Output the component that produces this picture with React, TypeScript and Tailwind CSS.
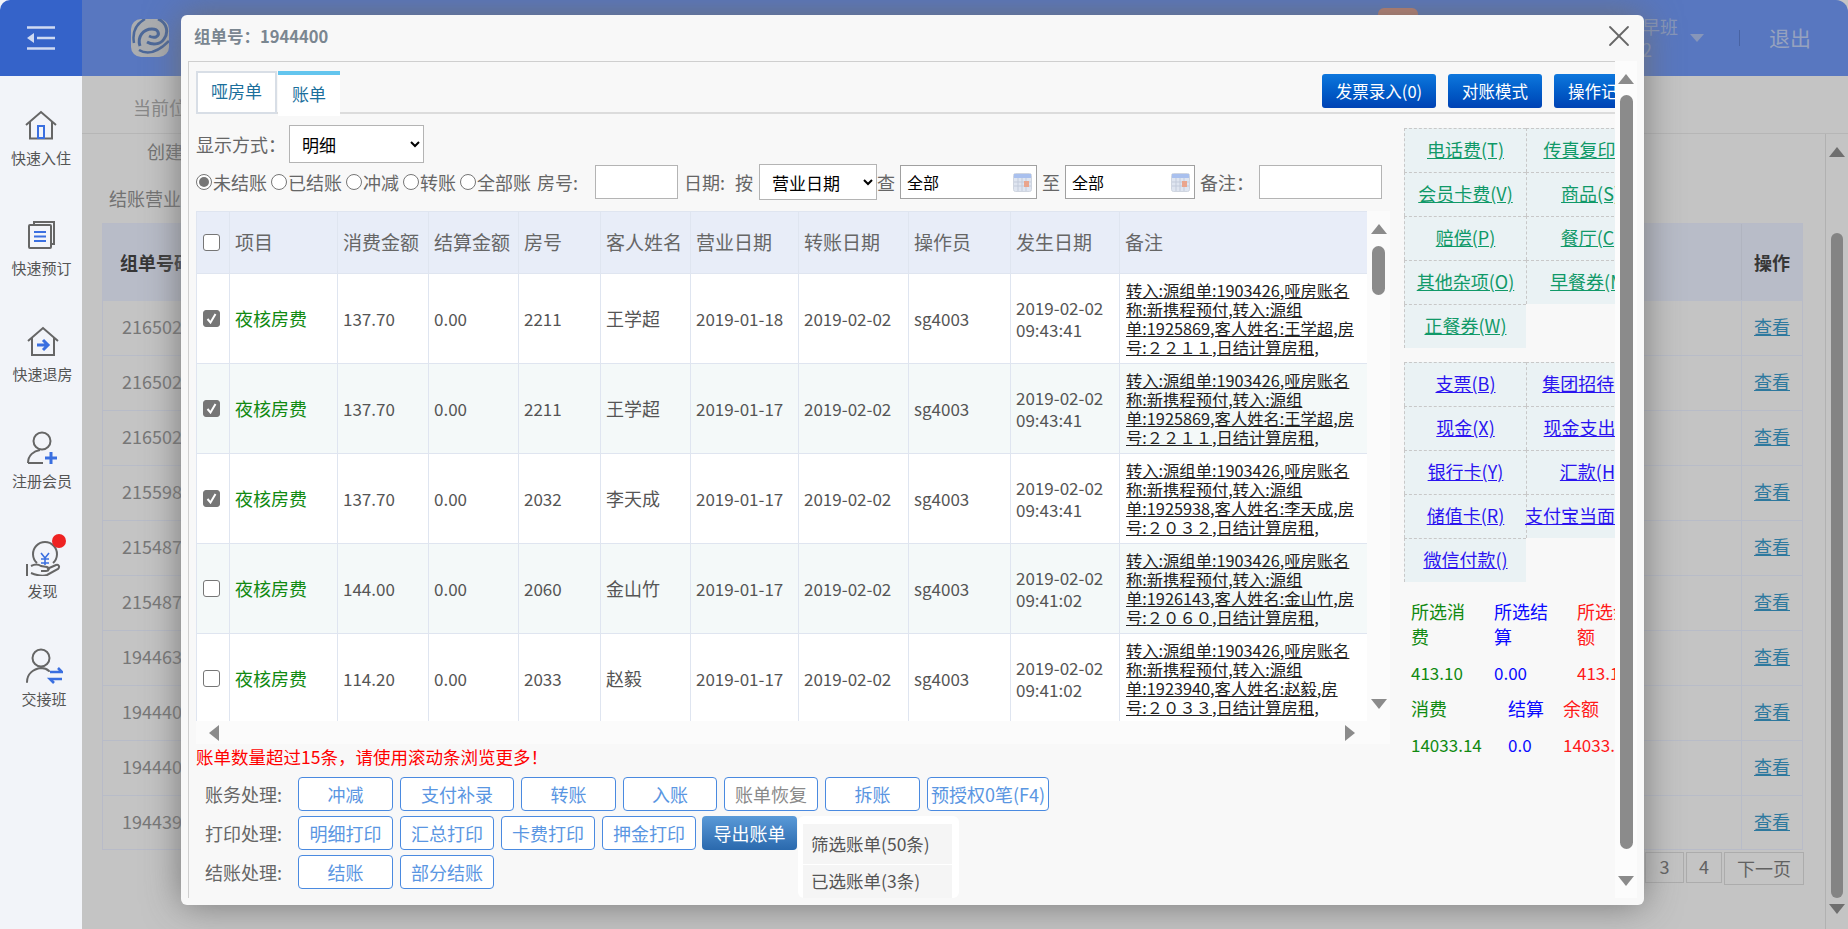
import { X } from "lucide-react"

interface BillRow {
  checked: boolean
  amount: string
  room: string
  guest: string
  bizDate: string
  time: string
  order: string
  wideRoom: string
}

const bills: BillRow[] = [
  { checked: true, amount: "137.70", room: "2211", guest: "王学超", bizDate: "2019-01-18", time: "09:43:41", order: "1925869", wideRoom: "２２１１" },
  { checked: true, amount: "137.70", room: "2211", guest: "王学超", bizDate: "2019-01-17", time: "09:43:41", order: "1925869", wideRoom: "２２１１" },
  { checked: true, amount: "137.70", room: "2032", guest: "李天成", bizDate: "2019-01-17", time: "09:43:41", order: "1925938", wideRoom: "２０３２" },
  { checked: false, amount: "144.00", room: "2060", guest: "金山竹", bizDate: "2019-01-17", time: "09:41:02", order: "1926143", wideRoom: "２０６０" },
  { checked: false, amount: "114.20", room: "2033", guest: "赵毅", bizDate: "2019-01-17", time: "09:41:02", order: "1923940", wideRoom: "２０３３" },
]

const backgroundRows = ["2165027", "2165026", "2165025", "2155986", "2154874", "2154873", "1944633", "1944405", "1944400", "1944399"]

const greenLinks = ["电话费(T)", "传真复印(F)", "会员卡费(V)", "商品(S)", "赔偿(P)", "餐厅(C)", "其他杂项(O)", "早餐券(M)", "正餐券(W)"]
const blueLinks = ["支票(B)", "集团招待(G)", "现金(X)", "现金支出(J)", "银行卡(Y)", "汇款(H)", "储值卡(R)", "支付宝当面付(Z)", "微信付款()"]

function Triangle({ dir, className }: { dir: "up" | "down" | "left" | "right"; className?: string }) {
  const points = {
    up: "0,12 8,0 16,12",
    down: "0,0 8,12 16,0",
    left: "10,0 10,16 0,8",
    right: "0,0 10,8 0,16",
  }[dir]
  const vertical = dir === "up" || dir === "down"
  return (
    <svg width={vertical ? 16 : 10} height={vertical ? 10 : 16} viewBox={vertical ? "0 0 16 12" : "0 0 10 16"} className={className} preserveAspectRatio="none">
      <polygon points={points} fill="#8b8b8b" />
    </svg>
  )
}

function HomeIcon() {
  return (
    <svg width="32" height="30" viewBox="0 0 32 30" fill="none" stroke="#666" strokeWidth="2">
      <path d="M1 15 16 2l15 13" />
      <path d="M5 12v16.500h22V12" />
      <rect x="13" y="16" width="6" height="12" stroke="#3a6fe0" />
    </svg>
  )
}

function DocsIcon() {
  return (
    <svg width="29" height="28" viewBox="0 0 29 28" fill="none" stroke="#666" strokeWidth="2">
      <path d="M7 3V1h20v22h-3" />
      <rect x="2" y="4" width="22" height="23" rx="1" />
      <path d="M7 11h12M7 15.500h12M7 20h12" stroke="#3a6fe0" />
    </svg>
  )
}

function ExitIcon() {
  return (
    <svg width="32" height="30" viewBox="0 0 32 30" fill="none" stroke="#666" strokeWidth="2">
      <path d="M1 15 16 2l15 13" />
      <path d="M5 12v17h22V12" />
      <path d="M10 19h11M16 14l5 5-5 5" stroke="#3a6fe0" strokeWidth="3" />
    </svg>
  )
}

function UserPlusIcon() {
  return (
    <svg width="30" height="34" viewBox="0 0 30 34" fill="none" stroke="#666" strokeWidth="2">
      <circle cx="15" cy="10" r="8.500" />
      <path d="M1 32c0-8 6-12 12-13M1 32h15" />
      <path d="M24 21v12M18 27h12" stroke="#3a6fe0" strokeWidth="3" />
    </svg>
  )
}

function CoinHandIcon() {
  return (
    <svg width="36" height="36" viewBox="0 0 36 36" fill="none" stroke="#666" strokeWidth="2">
      <path d="M12 23a12 12 0 1 1 16 0" />
      <path d="M16 13l4 5 4-5M20 18v7M16 19h8M16 23h8" stroke="#3a6fe0" strokeWidth="1.600" />
      <path d="M2 24v12" />
      <path d="M6 26c4-2 7-2 10 0l6 1c3 1 2 4-1 4h-5M22 29l9-4c3-1 4 2 2 4l-11 6c-5 2-11 0-16-2" />
    </svg>
  )
}

function UserSwapIcon() {
  return (
    <svg width="38" height="36" viewBox="0 0 38 36" fill="none" stroke="#666" strokeWidth="2">
      <circle cx="16" cy="10" r="8.500" />
      <path d="M2 34c0-8 6-13 14-14 3 0 6 1 8 3" strokeLinecap="round" />
      <path d="M25 24h12l-4-4M37 31H25l4 4" stroke="#3a6fe0" strokeWidth="2.600" />
    </svg>
  )
}

function LogoIcon() {
  return (
    <svg width="38" height="38" viewBox="0 0 38 38" fill="none">
      <rect width="38" height="38" rx="10" fill="#d6d9dd" />
      <path d="M14 0C5 5 1 13 3 24" stroke="#5f82c0" strokeWidth="2.500" />
      <path d="M27 0c9 4 11 13 6 20-4 6-12 6-17 3" stroke="#5f82c0" strokeWidth="3" />
      <path d="M9 27c-3-9 3-17 12-17 7 0 8 6 4 8-3 1-5 0-7-1" stroke="#5f82c0" strokeWidth="3" />
      <path d="M8 31c8 5 18 3 30-9" stroke="#5f82c0" strokeWidth="2.500" />
    </svg>
  )
}

function CalendarIcon() {
  return (
    <svg width="19" height="19" viewBox="0 0 19 19" className="shrink-0">
      <rect x="0.500" y="0.500" width="18" height="18" rx="2" fill="#dfe5f0" stroke="#cfd5e0" />
      <rect x="1" y="1" width="17" height="4" fill="#a9c0ee" />
      <path d="M1 9h17M1 13h17M5 5v13M9 5v13M13 5v13" stroke="#c3cbdb" />
      <rect x="11" y="8" width="5" height="6" fill="#eaa58d" />
    </svg>
  )
}

function Checkbox({ checked, className }: { checked: boolean; className?: string }) {
  return (
    <span className={`flex h-[17px] w-[17px] items-center justify-center rounded-[3px] border border-[#767676] ${checked ? "bg-[#767676]" : "bg-white"} ${className ?? ""}`}>
      {checked && (
        <svg width="11" height="11" viewBox="0 0 11 11" fill="none" stroke="#fff" strokeWidth="2">
          <path d="M1.500 6 4.500 9.500 9.500 1" />
        </svg>
      )}
    </span>
  )
}

function Radio({ label, checked }: { label: string; checked?: boolean }) {
  return (
    <span className="flex items-center">
      <span className="flex h-[16px] w-[16px] items-center justify-center rounded-full border border-[#767676] bg-white">
        {checked && <span className="h-[10px] w-[10px] rounded-full bg-[#767676]" />}
      </span>
      <span className="ml-px">{label}</span>
    </span>
  )
}

function DateInput({ className }: { className: string }) {
  return (
    <div className={`flex h-[34px] items-center justify-between border border-[#a0a0a0] bg-white pl-[6px] pr-[4px] text-[16px] text-black ${className}`}>
      <span>全部</span>
      <CalendarIcon />
    </div>
  )
}

function ActionButton({ label, width, muted }: { label: string; width: string; muted?: boolean }) {
  return (
    <button type="button" className={`h-[34px] rounded-[4px] border border-[#4a8ae0] bg-white text-[18px] whitespace-nowrap ${width} ${muted ? "text-[#8a8a8a]" : "text-[#5a96e2]"}`}>
      {label}
    </button>
  )
}

function TopButton({ label, width, className }: { label: string; width: string; className?: string }) {
  return (
    <button type="button" className={`h-[34px] shrink-0 rounded-[3px] bg-gradient-to-b from-[#0f77dd] to-[#0042b4] text-[16.500px] whitespace-nowrap text-white ${width} ${className ?? ""}`}>
      {label}
    </button>
  )
}

function SideItem({ icon, label, height, shift, dot }: { icon: React.ReactNode; label: string; height: string; shift?: string; dot?: boolean }) {
  return (
    <div className={`flex flex-col items-center ${height} ${shift ?? ""}`}>
      <div className="relative flex h-[36px] items-center justify-center">
        {icon}
        {dot && <span className="absolute right-[-5px] top-[-6px] h-[14px] w-[14px] rounded-full bg-[#ee2222]" />}
      </div>
      <div className="mt-[5px] text-[15px] leading-[20px] whitespace-nowrap text-[#555]">{label}</div>
    </div>
  )
}

function LinkGrid({ links, color }: { links: string[]; color: string }) {
  return (
    <div className="grid w-[250px] grid-cols-[122px_128px]">
      {links.map((link) => (
        <a
          key={link}
          className={`flex h-[44px] items-center justify-center border-l border-t border-dashed border-[#c8c8c8] bg-[#eaf2f4] pb-[2px] text-[18px] whitespace-nowrap underline ${color}`}
        >
          {link}
        </a>
      ))}
    </div>
  )
}

function NoteCell({ row }: { row: BillRow }) {
  return (
    <a className="block text-[16.300px] leading-[19px] whitespace-nowrap text-[#222] underline">
      <span className="block">转入:源组单:1903426,哑房账名</span>
      <span className="block">称:新携程预付,转入:源组</span>
      <span className="block">单:{row.order},客人姓名:{row.guest},房</span>
      <span className="block">号:{row.wideRoom},日结计算房租,</span>
    </a>
  )
}

function BillTable() {
  const head = "border border-[#dfe5f0] pl-[5px] text-left font-normal text-[#666]"
  const cell = "border border-[#dfe5f0] pl-[5px]"
  return (
    <table className="w-[1171px] table-fixed border-collapse text-[17px] text-[#555]">
      <colgroup>
        <col className="w-[33px]" />
        <col className="w-[108px]" />
        <col className="w-[91px]" />
        <col className="w-[90px]" />
        <col className="w-[82px]" />
        <col className="w-[90px]" />
        <col className="w-[108px]" />
        <col className="w-[110px]" />
        <col className="w-[102px]" />
        <col className="w-[109px]" />
        <col className="w-[248px]" />
      </colgroup>
      <thead>
        <tr className="h-[62px] bg-[#e8edf8] text-[19px]">
          <th className="border border-[#dfe5f0] pl-[6px]">
            <Checkbox checked={false} />
          </th>
          {["项目", "消费金额", "结算金额", "房号", "客人姓名", "营业日期", "转账日期", "操作员", "发生日期", "备注"].map((h) => (
            <th key={h} className={head}>{h}</th>
          ))}
        </tr>
      </thead>
      <tbody>
        {bills.map((row, i) => (
          <tr key={i} className={`h-[90px] ${i % 2 === 1 ? "bg-[#f4f9f9]" : "bg-white"}`}>
            <td className="border border-[#dfe5f0] pl-[6px]">
              <Checkbox checked={row.checked} />
            </td>
            <td className={`${cell} text-[18px] text-[#118a11]`}>夜核房费</td>
            <td className={cell}>{row.amount}</td>
            <td className={cell}>0.00</td>
            <td className={cell}>{row.room}</td>
            <td className={`${cell} text-[18px]`}>{row.guest}</td>
            <td className={cell}>{row.bizDate}</td>
            <td className={cell}>2019-02-02</td>
            <td className={cell}>sg4003</td>
            <td className={`${cell} leading-[22px]`}>2019-02-02<br />{row.time}</td>
            <td className="border border-[#dfe5f0] pl-[6px]">
              <NoteCell row={row} />
            </td>
          </tr>
        ))}
      </tbody>
    </table>
  )
}

function BillModal() {
  return (
    <div className="absolute left-[181px] top-[15px] z-20 flex h-[890px] w-[1463px] flex-col rounded-[6px] bg-[#f8f8f8] font-['Noto_Sans_CJK_SC','Noto_Sans',sans-serif] text-[#666] shadow-[0_0_36px_rgba(110,110,110,0.9)]">
      <div className="flex h-[46px] shrink-0 items-center justify-between pb-[4px] pl-[13px] pr-[7px]">
        <span className="text-[16.500px] font-bold text-[#7a8690]">组单号：1944400</span>
        <X size={36} strokeWidth={1.200} className="text-[#666]" />
      </div>
      <div className="flex h-[837px] pl-[7px]">
        {/* 主内容 */}
        <div className="w-[1427px] overflow-hidden border-l border-t border-[#cfcfcf] pl-[7px]">
          <div className="flex h-[52px] items-start justify-between border-b-2 border-[#dcdcdc] pt-[9px]">
            <div className="flex text-[17px] text-[#1b6f9c]">
              <div className="flex h-[43px] w-[81px] items-center justify-center border-2 border-[#d8dee6] bg-white pb-[3px]">哑房单</div>
              <div className="ml-[1px] flex h-[45px] w-[62px] items-center justify-center border-t-4 border-[#63c5ee] bg-white pb-[3px]">账单</div>
            </div>
            <div className="-mr-[33px] flex gap-[12px] pt-[3px]">
              <TopButton label="发票录入(0)" width="w-[114px]" />
              <TopButton label="对账模式" width="w-[94px]" />
              <TopButton label="操作记录" width="w-[94px]" />
            </div>
          </div>
          <div className="flex">
            {/* 账单列表 */}
            <div className="w-[1194px] shrink-0">
              <div className="mt-[11px] flex items-center text-[18px]">
                <span className="w-[93px]">显示方式：</span>
                <select defaultValue="明细" className="h-[38px] w-[135px] border border-[#b4b4b4] bg-white pl-[8px] text-[17px] text-black">
                  <option>明细</option>
                </select>
              </div>
              <div className="mt-[1px] flex h-[36px] items-center text-[18px] whitespace-nowrap">
                <div className="flex gap-[4px]">
                  <Radio label="未结账" checked />
                  <Radio label="已结账" />
                  <Radio label="冲减" />
                  <Radio label="转账" />
                  <Radio label="全部账" />
                </div>
                <span className="ml-[6px] w-[48px]">房号:</span>
                <div className="ml-[10px] h-[34px] w-[83px] border border-[#b4b4b4] bg-white" />
                <span className="ml-[6px] w-[51px]">日期:</span>
                <span className="w-[24px]">按</span>
                <select defaultValue="营业日期" className="h-[36px] w-[118px] border border-[#b4b4b4] bg-white pl-[8px] text-[17px] text-black">
                  <option>营业日期</option>
                </select>
                <span className="w-[23px]">查</span>
                <DateInput className="w-[137px]" />
                <span className="ml-[5px] w-[23px]">至</span>
                <DateInput className="w-[130px]" />
                <span className="ml-[5px] w-[59px]">备注：</span>
                <div className="h-[34px] w-[123px] border border-[#b4b4b4] bg-white" />
              </div>
              <div className="mt-[11px] flex h-[510px]">
                <div className="w-[1171px] overflow-hidden">
                  <BillTable />
                </div>
                <div className="flex w-[23px] flex-col items-center bg-[#fbfbfb] pt-[13px]">
                  <Triangle dir="up" />
                  <div className="mt-[12px] h-[49px] w-[13px] rounded-full bg-[#8b8b8b]" />
                  <Triangle dir="down" className="mt-[404px]" />
                </div>
              </div>
              <div className="flex h-[23px] items-center justify-between bg-[#fbfbfb] pl-[13px] pr-[35px]">
                <Triangle dir="left" />
                <Triangle dir="right" />
              </div>
              <div className="h-[25px] text-[17.500px] leading-[25px] text-[#ff0000]">账单数量超过15条，请使用滚动条浏览更多！</div>
              <div className="mt-[8px] flex items-center">
                <span className="w-[102px] pl-[9px] text-[18px]">账务处理:</span>
                <div className="flex gap-[7px]">
                  <ActionButton label="冲减" width="w-[95px]" />
                  <ActionButton label="支付补录" width="w-[114px]" />
                  <ActionButton label="转账" width="w-[95px]" />
                  <ActionButton label="入账" width="w-[94px]" />
                  <ActionButton label="账单恢复" width="w-[94px]" muted />
                  <ActionButton label="拆账" width="w-[95px]" />
                  <ActionButton label="预授权0笔(F4)" width="w-[122px]" />
                </div>
              </div>
              <div className="mt-[5px] flex items-start">
                <div className="w-[602px] shrink-0">
                  <div className="flex items-center">
                    <span className="w-[102px] pl-[9px] text-[18px]">打印处理:</span>
                    <div className="flex gap-[7px]">
                      <ActionButton label="明细打印" width="w-[95px]" />
                      <ActionButton label="汇总打印" width="w-[94px]" />
                      <ActionButton label="卡费打印" width="w-[94px]" />
                      <ActionButton label="押金打印" width="w-[94px]" />
                      <button type="button" className="-ml-px h-[34px] w-[95px] rounded-[4px] bg-gradient-to-b from-[#5a9ad8] to-[#2a69ad] text-[18px] text-white">导出账单</button>
                    </div>
                  </div>
                  <div className="mt-[5px] flex items-center">
                    <span className="w-[102px] pl-[9px] text-[18px]">结账处理:</span>
                    <div className="flex gap-[7px]">
                      <ActionButton label="结账" width="w-[95px]" />
                      <ActionButton label="部分结账" width="w-[94px]" />
                    </div>
                  </div>
                </div>
                <div className="h-[82px] w-[161px] rounded-[6px] bg-white pl-[5px] pr-[7px] pt-[8px] text-[17.500px] text-[#555]">
                  <div className="flex h-[40px] items-center bg-[#f5f5f5] pl-[8px]">筛选账单(50条)</div>
                  <div className="mt-[1px] flex h-[33px] items-center bg-[#f5f5f5] pl-[8px]">已选账单(3条)</div>
                </div>
              </div>
            </div>
            {/* 右侧入账项目 */}
            <div className="ml-[14px] min-w-0 flex-1 overflow-hidden pt-[14px] text-[17px]">
              <LinkGrid links={greenLinks} color="text-[#109968]" />
              <div className="mt-[14px]">
                <LinkGrid links={blueLinks} color="text-[#2a14f0]" />
              </div>
              <div className="mt-[17px] pl-[7px] whitespace-nowrap">
                <div className="flex text-[18px] leading-[25px]">
                  <div className="w-[83px] shrink-0 text-[#118a11]">所选消<br />费</div>
                  <div className="w-[83px] shrink-0 text-[#0a0aff]">所选结<br />算</div>
                  <div className="shrink-0 text-[#ff1a1a]">所选余<br />额</div>
                </div>
                <div className="mt-[11px] flex leading-[25px]">
                  <div className="w-[83px] shrink-0 text-[#118a11]">413.10</div>
                  <div className="w-[83px] shrink-0 text-[#0a0aff]">0.00</div>
                  <div className="shrink-0 text-[#ff1a1a]">413.10</div>
                </div>
                <div className="mt-[11px] flex text-[18px] leading-[25px]">
                  <div className="w-[97px] shrink-0 text-[#118a11]">消费</div>
                  <div className="w-[55px] shrink-0 text-[#0a0aff]">结算</div>
                  <div className="shrink-0 text-[#ff1a1a]">余额</div>
                </div>
                <div className="mt-[11px] flex leading-[25px]">
                  <div className="w-[97px] shrink-0 text-[#118a11]">14033.14</div>
                  <div className="w-[55px] shrink-0 text-[#0a0aff]">0.0</div>
                  <div className="shrink-0 text-[#ff1a1a]">14033.14</div>
                </div>
              </div>
            </div>
          </div>
        </div>
        {/* 弹窗滚动条 */}
        <div className="flex w-[22px] flex-col items-center bg-[#fcfcfc] pt-[13px]">
          <Triangle dir="up" />
          <div className="mt-[11px] h-[754px] w-[13px] rounded-full bg-[#8b8b8b]" />
          <Triangle dir="down" className="mt-[27px]" />
        </div>
      </div>
    </div>
  )
}

function BackgroundPage() {
  return (
    <div className="flex h-full min-w-0 flex-1 flex-col bg-[#f5f5f5] text-[#999]">
      <div className="relative flex h-[76px] shrink-0 items-center rounded-tr-[12px] bg-[#6e95f0] pl-[49px] pr-[37px]">
        <LogoIcon />
        <span className="absolute left-[1296px] top-[8px] h-[7px] w-[40px] rounded-t-[6px] bg-[#f0a08c]" />
        <div className="ml-auto w-[36px] shrink-0 text-[18px] leading-[23px] whitespace-nowrap text-[#a9bce8]">早班<br />2</div>
        <div className="ml-[12px] h-0 w-0 border-x-[7px] border-t-[8px] border-x-transparent border-t-[#a9bce8]" />
        <div className="ml-[35px] h-[16px] w-px bg-[#5a7ccc]" />
        <div className="ml-[29px] w-[42px] shrink-0 text-[21px] whitespace-nowrap text-[#bccbee]">退出</div>
      </div>
      <div className="flex h-[58px] shrink-0 items-center border-b border-[#e4e4e4] pl-[51px] pt-[6px] text-[18px] text-[#aaa]">当前位置</div>
      <div className="flex min-h-0 flex-1">
        <div className="w-[1743px] shrink-0 pl-[20px] text-[18px]">
          <div className="h-[89px] pt-[4px] text-[#8f8f8f]">
            <div className="pl-[45px] leading-[26px]">创建日期</div>
            <div className="mt-[21px] pl-[7px] leading-[26px]">结账营业日期</div>
          </div>
          <div className="w-[1701px] border border-[#e6eafa] bg-[#f5f5f5]">
            <div className="flex h-[76px] items-center justify-between bg-[#e6ebfa] font-bold text-[#444]">
              <span className="pl-[17px]">组单号码</span>
              <div className="w-[61px] border-l border-[#dde2f0] text-center leading-[76px]">操作</div>
            </div>
            {backgroundRows.map((no) => (
              <div key={no} className="flex h-[55px] items-center justify-between border-t border-[#e6ebfa] text-[#959595] last:h-[54px]">
                <span className="pb-[3px] pl-[19px]">{no}</span>
                <div className="h-full w-[61px] border-l border-[#e6ebfa] pb-[3px] text-center leading-[50px] text-[#3a98c6] underline">查看</div>
              </div>
            ))}
          </div>
          <div className="mt-[2px] flex justify-end pr-[21px] text-[#7a7a7a]">
            <div className="flex h-[31px] w-[39px] items-center justify-center border border-[#d8d8d8] pb-[2px]">3</div>
            <div className="ml-[2px] flex h-[31px] w-[36px] items-center justify-center border border-[#d8d8d8] pb-[2px]">4</div>
            <div className="ml-[2px] flex h-[33px] w-[80px] items-center justify-center border border-[#d8d8d8]">下一页</div>
          </div>
        </div>
        <div className="flex w-[23px] flex-col items-center border-l border-[#dedede] pt-[13px]">
          <Triangle dir="up" />
          <div className="mt-[76px] h-[665px] w-[12px] rounded-full bg-[#a6a6a6]" />
          <Triangle dir="down" className="mt-[6px]" />
        </div>
      </div>
    </div>
  )
}

export default function App() {
  return (
    <div className="relative flex h-[929px] w-[1848px] overflow-hidden bg-[#f5f5f5] font-['Noto_Sans_CJK_SC','Noto_Sans',sans-serif]">
      {/* 侧边栏 */}
      <div className="relative z-30 h-full w-[82px] shrink-0 bg-[#f2f4f9]">
        <div className="flex h-[76px] items-center justify-center rounded-tl-[10px] bg-[#3563c9]">
          <svg width="28" height="24" viewBox="0 0 28 24" fill="none">
            <path d="M0 1.500h28M10 12h18M0 22.500h28" stroke="#cfdaf2" strokeWidth="2.500" />
            <polygon points="0,12 7,7 7,17" fill="#cfdaf2" />
          </svg>
        </div>
        <div className="pt-[31px]">
          <SideItem icon={<HomeIcon />} label="快速入住" height="h-[110px]" />
          <SideItem icon={<DocsIcon />} label="快速预订" height="h-[106px]" shift="pl-[1px]" />
          <SideItem icon={<ExitIcon />} label="快速退房" height="h-[107px]" shift="pl-[3px]" />
          <SideItem icon={<UserPlusIcon />} label="注册会员" height="h-[110px]" shift="pl-[2px]" />
          <SideItem icon={<CoinHandIcon />} label="发现" height="h-[108px]" shift="pl-[3px]" dot />
          <SideItem icon={<UserSwapIcon />} label="交接班" height="h-[100px]" shift="pl-[6px]" />
        </div>
      </div>
      <BackgroundPage />
      {/* 遮罩 */}
      <div className="absolute inset-y-0 left-[82px] right-0 z-10 bg-black/20" />
      <BillModal />
    </div>
  )
}
